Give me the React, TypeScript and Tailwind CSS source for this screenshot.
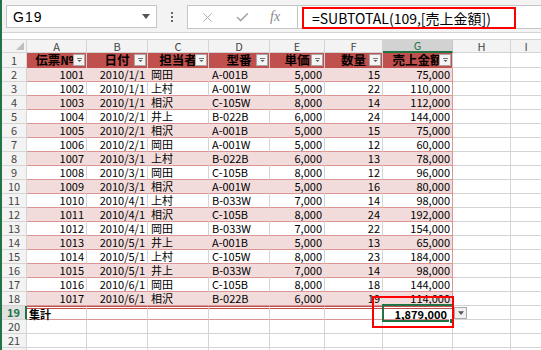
import { X, Check } from 'lucide-react';

const W = ['w-[60px]', 'w-[61px]', 'w-[61px]', 'w-[61px]', 'w-[55px]', 'w-[58px]', 'w-[70px]'];
const AL = ['justify-end', 'justify-end', 'justify-start', 'justify-start', 'justify-end', 'justify-end', 'justify-end'];
const LETTERS = ['A', 'B', 'C', 'D', 'E', 'F', 'G'];
const HEAD = ['伝票№', '日付', '担当者', '型番', '単価', '数量', '売上金額'];

const rows = [
  ['1001', '2010/1/1', '岡田', 'A-001B', '5,000', '15', '75,000'],
  ['1002', '2010/1/1', '上村', 'A-001W', '5,000', '22', '110,000'],
  ['1003', '2010/1/1', '相沢', 'C-105W', '8,000', '14', '112,000'],
  ['1004', '2010/2/1', '井上', 'B-022B', '6,000', '24', '144,000'],
  ['1005', '2010/2/1', '相沢', 'A-001B', '5,000', '15', '75,000'],
  ['1006', '2010/2/1', '岡田', 'A-001W', '5,000', '12', '60,000'],
  ['1007', '2010/3/1', '上村', 'B-022B', '6,000', '13', '78,000'],
  ['1008', '2010/3/1', '岡田', 'C-105B', '8,000', '12', '96,000'],
  ['1009', '2010/3/1', '相沢', 'A-001W', '5,000', '16', '80,000'],
  ['1010', '2010/4/1', '上村', 'B-033W', '7,000', '14', '98,000'],
  ['1011', '2010/4/1', '相沢', 'C-105B', '8,000', '24', '192,000'],
  ['1012', '2010/4/1', '岡田', 'B-033W', '7,000', '22', '154,000'],
  ['1013', '2010/5/1', '井上', 'A-001B', '5,000', '13', '65,000'],
  ['1014', '2010/5/1', '上村', 'C-105W', '8,000', '23', '184,000'],
  ['1015', '2010/5/1', '井上', 'B-033W', '7,000', '14', '98,000'],
  ['1016', '2010/6/1', '岡田', 'C-105B', '8,000', '18', '144,000'],
  ['1017', '2010/6/1', '相沢', 'B-022B', '6,000', '19', '114,000'],
];

function FilterBtn() {
  return (
    <div className="absolute right-[1px] top-[1px] w-[12px] h-[12px] bg-[#f4f4f4] border border-[#a9a9a9] flex items-center justify-center">
      <svg width="7" height="6" viewBox="0 0 7 6">
        <path d="M1 1.5h5" stroke="#777" strokeWidth="1" />
        <path d="M1.5 3h4L3.5 5z" fill="#555" />
      </svg>
    </div>
  );
}

function DropBtn({ className }: { className: string }) {
  return (
    <svg className={className} width="8" height="5" viewBox="0 0 8 5">
      <path d="M0 0h8L4 5z" fill="#555" />
    </svg>
  );
}

function RowHead({ n, active }: { n: number; active?: boolean }) {
  return (
    <div
      className={
        active
          ? 'w-[25px] h-full shrink-0 bg-[#e1e1e1] border-r-2 border-r-[#217346] border-b border-b-[#d4d4d4] flex items-center justify-center text-[11px] leading-none text-[#217346] font-bold'
          : 'w-[25px] h-full shrink-0 bg-[#f3f3f3] border-r border-b border-[#d4d4d4] flex items-center justify-center text-[11px] leading-none text-[#444]'
      }
    >
      {n}
    </div>
  );
}

function Tail() {
  return (
    <>
      <div className="w-[58px] h-full shrink-0 border-r border-b border-[#d4d4d4]" />
      <div className="flex-1 h-full border-b border-[#d4d4d4]" />
    </>
  );
}

export default function App() {
  return (
    <div className="relative w-[541px] h-[350px] overflow-hidden bg-white flex font-['Noto_Sans_CJK_JP',sans-serif] text-black">
      <div className="w-[2px] shrink-0 bg-[#217346]" />
      <div className="flex-1 flex flex-col min-w-0">
        {/* formula bar */}
        <div className="h-[33px] shrink-0 bg-[#f3f3f3] border-b border-[#d5d5d5] flex items-start pt-[5px]">
          <div className="ml-[4px] w-[151px] h-[23px] bg-white border border-[#c6c6c6] flex items-center justify-between pl-[6px] pr-[6px]">
            <span className="text-[14px] leading-none font-['Liberation_Sans',sans-serif] tracking-[1px]">G19</span>
            <DropBtn className="" />
          </div>
          <div className="w-[30px] h-[23px] flex flex-col items-center justify-center gap-[2px]">
            <div className="w-[2px] h-[2px] bg-[#666]" />
            <div className="w-[2px] h-[2px] bg-[#666]" />
            <div className="w-[2px] h-[2px] bg-[#666]" />
          </div>
          <div className="w-[110px] h-[24px] bg-white border border-[#c6c6c6] border-r-0 flex items-center">
            <X className="ml-[12px] text-[#a6a6a6]" size={15} strokeWidth={1.5} />
            <Check className="ml-[20px] text-[#a6a6a6]" size={15} strokeWidth={2.5} />
            <span className="ml-[20px] text-[14px] leading-none italic text-[#888] font-['Liberation_Serif',serif]">fx</span>
          </div>
          <div className="flex-1 h-[24px] bg-white border border-[#c6c6c6] border-r-0 pl-[4px] flex items-start pt-[1px]">
            <div className="w-[214px] h-[22px] border-2 border-[#ff0000] pl-[8px] flex items-center text-[14px] leading-none whitespace-nowrap">
              =SUBTOTAL(109,[売上金額])
            </div>
          </div>
        </div>
        <div className="h-[6px] shrink-0 bg-white" />

        {/* column headers */}
        <div className="h-[13px] shrink-0 flex border-t border-[#d4d4d4] box-content">
          <div className="relative w-[25px] h-full shrink-0 bg-[#f3f3f3] border-r border-b border-[#d4d4d4]">
            <svg className="absolute right-[2px] bottom-[2px]" width="8" height="8" viewBox="0 0 8 8">
              <path d="M8 0V8H0z" fill="#c0c0c0" />
            </svg>
          </div>
          {LETTERS.map((l, i) =>
            l === 'G' ? (
              <div key={l} className={`${W[i]} h-full shrink-0 bg-[#d2d2d2] border-r border-[#c6c6c6] border-b-2 border-b-[#217346] flex items-center justify-center text-[11px] leading-none text-[#217346]`}>
                {l}
              </div>
            ) : (
              <div key={l} className={`${W[i]} h-full shrink-0 bg-[#f3f3f3] border-r border-b border-[#d4d4d4] flex items-center justify-center text-[11px] leading-none text-[#444]`}>
                {l}
              </div>
            )
          )}
          <div className="w-[58px] h-full shrink-0 bg-[#f3f3f3] border-r border-b border-[#d4d4d4] flex items-center justify-center text-[11px] leading-none text-[#444]">H</div>
          <div className="flex-1 h-full bg-[#f3f3f3] border-b border-[#d4d4d4] flex items-center justify-center text-[11px] leading-none text-[#444]">I</div>
        </div>

        {/* row 1: table header */}
        <div className="h-[15px] shrink-0 flex">
          <RowHead n={1} />
          {HEAD.map((h, i) => (
            <div key={h} className={`relative ${W[i]} h-full shrink-0 bg-[#c0504d] border-r border-r-[#d0d0d0] flex items-center justify-center ${i === 0 ? 'pr-[4px]' : ''}`}>
              <span className="text-[12.5px] font-bold leading-none whitespace-nowrap">{h}</span>
              <FilterBtn />
            </div>
          ))}
          <Tail />
        </div>

        {/* data rows */}
        {rows.map((r, ri) => {
          const pink = ri % 2 === 0;
          return (
            <div key={ri} className="h-[14px] shrink-0 flex">
              <RowHead n={ri + 2} />
              {r.map((v, ci) => (
                <div
                  key={ci}
                  className={`${W[ci]} h-full shrink-0 flex items-center px-[2px] text-[11px] leading-none whitespace-nowrap border-b border-b-[#da9694] border-r ${AL[ci]} ${
                    ci === 6 ? 'border-r-[#da9694]' : pink ? 'border-r-[#f2dcdb]' : 'border-r-[#d4d4d4]'
                  } ${pink ? 'bg-[#f2dcdb]' : 'bg-white'} ${ci === 2 || ci === 3 ? 'pl-[3px]' : ''}`}
                >
                  {v}
                </div>
              ))}
              <Tail />
            </div>
          );
        })}

        {/* row 19: total */}
        <div className="h-[14px] shrink-0 flex">
          <RowHead n={19} active />
          {W.map((w, ci) => (
            <div
              key={ci}
              className={`${w} h-full shrink-0 flex items-center px-[2px] text-[11px] leading-none font-bold whitespace-nowrap border-t-[3px] border-double border-t-[#c0504d] border-b border-b-[#da9694] border-r ${
                ci === 6 ? 'border-r-[#da9694] justify-end pr-[5px]' : 'border-r-[#d4d4d4]'
              }`}
            >
              {ci === 0 ? '集計' : ci === 6 ? '1,879,000' : ''}
            </div>
          ))}
          <Tail />
        </div>

        {[20, 21, 22].map((n) => (
          <div key={n} className="h-[14px] shrink-0 flex">
            <RowHead n={n} />
            {W.map((w, ci) => (
              <div key={ci} className={`${w} h-full shrink-0 border-r border-b border-[#d4d4d4]`} />
            ))}
            <Tail />
          </div>
        ))}
      </div>

      {/* selection of G19 */}
      <div className="absolute left-[382px] top-[304px] w-[72px] h-[18px] border-2 border-[#217346]" />
      <div className="absolute left-[449px] top-[318px] w-[6px] h-[6px] bg-[#217346] border border-white" />
      <div className="absolute left-[454px] top-[307px] w-[13px] h-[12px] bg-[#f0f0f0] border border-[#a9a9a9] flex items-center justify-center">
        <DropBtn className="w-[6px] h-[4px]" />
      </div>
      {/* annotation */}
      <div className="absolute left-[372px] top-[296px] w-[82px] h-[32px] border-2 border-[#ff0000]" />
    </div>
  );
}
